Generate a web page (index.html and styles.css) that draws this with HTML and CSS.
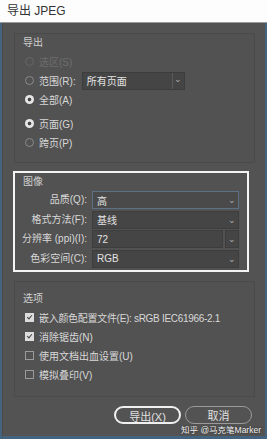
FILE: index.html
```html
<!DOCTYPE html>
<html lang="zh-CN">
<head>
    <meta charset="UTF-8">
    <title>导出 JPEG</title>
    <link rel="stylesheet" href="styles.css">
</head>
<body>
    <div class="titlebar">导出 JPEG</div>
    <div class="window">
        <!-- 导出 -->
        <div class="group export">
            <div class="group-title">导出</div>
            <div class="row disabled"><span class="radio"></span>选区(S)</div>
            <div class="row">
                <span class="radio"></span>范围(R):
                <div class="select range"><span>所有页面</span><span class="arrow boxed">⌄</span></div>
            </div>
            <div class="row"><span class="radio on"></span>全部(A)</div>
            <div class="row spaced"><span class="radio on"></span>页面(G)</div>
            <div class="row"><span class="radio"></span>跨页(P)</div>
        </div>

        <!-- 图像 -->
        <div class="group image">
            <div class="group-title">图像</div>
            <div class="form-grid">
                <label>品质(Q):</label>
                <div class="select focus"><span>高</span><span class="arrow">⌄</span></div>
                <label>格式方法(F):</label>
                <div class="select"><span>基线</span><span class="arrow">⌄</span></div>
                <label>分辨率 (ppi)(I):</label>
                <div class="combo">
                    <div class="select"><span>72</span></div>
                    <div class="select btn"><span class="arrow">⌄</span></div>
                </div>
                <label>色彩空间(C):</label>
                <div class="select"><span>RGB</span><span class="arrow">⌄</span></div>
            </div>
        </div>

        <!-- 选项 -->
        <div class="group options">
            <div class="group-title">选项</div>
            <div class="row tight"><span class="check on"></span>嵌入颜色配置文件(E): sRGB IEC61966-2.1</div>
            <div class="row"><span class="check on"></span>消除锯齿(N)</div>
            <div class="row"><span class="check"></span>使用文档出血设置(U)</div>
            <div class="row"><span class="check"></span>模拟叠印(V)</div>
        </div>

        <div class="buttons">
            <button class="primary">导出(X)</button>
            <button>取消</button>
        </div>
        <div class="watermark">知乎 @马克笔Marker</div>
    </div>
</body>
</html>
```
FILE: styles.css
```css
* {
    box-sizing: border-box;
    margin: 0;
    padding: 0;
}
body {
    width: 267px;
    height: 439px;
    overflow: hidden;
    background: #44637f;
    font-family: "Liberation Sans", "Noto Sans CJK SC", sans-serif;
    font-size: 10px;
    color: #d8d8d8;
}
.titlebar {
    height: 23px;
    background: #fdfdfd;
    color: #333;
    font-size: 12px;
    line-height: 22px;
    padding-left: 7px;
    border-bottom: 1px solid #9a9a9a;
}
.window {
    position: relative;
    height: 413px;
    margin: 0 2px;
    background: #535353;
    padding: 10px 10px 0 11px;
    border-left: 1px solid #4f4946;
}
.group {
    border: 1px solid #4a4a4a;
    background: #525252;
}
.group-title {
    height: 14px;
    line-height: 14px;
    padding-left: 8px;
    color: #d0d0d0;
}
.row {
    display: flex;
    align-items: center;
    height: 19px;
    padding-left: 10px;
    gap: 5px;
    white-space: nowrap;
}
.row.disabled {
    color: #6d6d6d;
}
.row.spaced {
    margin-top: 5px;
}
.row.tight {
    letter-spacing: -0.3px;
}

/* export group */
.export {
    height: 130px;
    padding-top: 2px;
}
.export .group-title {
    margin-bottom: 2px;
}
.radio {
    width: 9px;
    height: 9px;
    border-radius: 50%;
    border: 1px solid #8a8a8a;
}
.disabled .radio {
    border-color: #666;
}
.radio.on {
    border: none;
    background: radial-gradient(circle, #4a4a4a 0 1.6px, #e6e6e6 2.2px);
}
.select {
    display: flex;
    align-items: center;
    justify-content: space-between;
    height: 18px;
    background: #454545;
    border: 1px solid #3d3d3d;
    padding-left: 4px;
    color: #e4e4e4;
}
.select.range {
    width: 103px;
    margin-left: 1px;
    padding-right: 0;
}
.arrow {
    font-size: 9px;
    line-height: 8px;
    color: #b0b0b0;
    width: 12px;
    text-align: center;
}
.arrow.boxed {
    height: 16px;
    line-height: 12px;
    border-left: 1px solid #5a5a5a;
}

/* image group */
.image {
    margin-top: 8px;
    margin-left: -1px;
    width: 236px;
    height: 101px;
    border: 2px solid #f4f4f4;
    padding-top: 2px;
}
.form-grid {
    display: grid;
    grid-template-columns: 72px 1fr;
    column-gap: 5px;
    row-gap: 1.5px;
    padding-right: 8px;
    margin-top: 2px;
}
.form-grid label {
    text-align: right;
    line-height: 18px;
    white-space: nowrap;
}
.select.focus {
    border-color: #5d7186;
    background: #4a4a4a;
}
.combo {
    display: flex;
    gap: 2px;
}
.combo .select {
    flex: 1;
}
.combo .select.btn {
    flex: 0 0 12px;
    padding: 0;
    justify-content: center;
}

/* options group */
.options {
    margin-top: 9px;
    height: 116px;
    padding-top: 10px;
}
.options .group-title {
    margin-bottom: 2px;
}
.check {
    width: 9px;
    height: 9px;
    border: 1px solid #9a9a9a;
    position: relative;
}
.check.on {
    background: #dcdcdc;
    border-color: #dcdcdc;
}
.check.on::after {
    content: "";
    position: absolute;
    left: 2px;
    top: 0;
    width: 2px;
    height: 4px;
    border: solid #444;
    border-width: 0 1.5px 1.5px 0;
    transform: rotate(40deg);
}

/* buttons */
.buttons {
    display: flex;
    justify-content: flex-end;
    gap: 4px;
    margin-top: 9px;
    padding-right: 3px;
}
button {
    width: 67px;
    height: 18px;
    border-radius: 10px;
    background: #535353;
    color: #e0e0e0;
    border: 1px solid #9a9a9a;
    font-family: inherit;
    font-size: 11px;
}
button.primary {
    border: 2px solid #f0f0f0;
}
.watermark {
    position: absolute;
    right: 4px;
    bottom: 1px;
    font-size: 8.5px;
    color: #f2f2f2;
    text-shadow: 0 0 2px #222;
}
```
